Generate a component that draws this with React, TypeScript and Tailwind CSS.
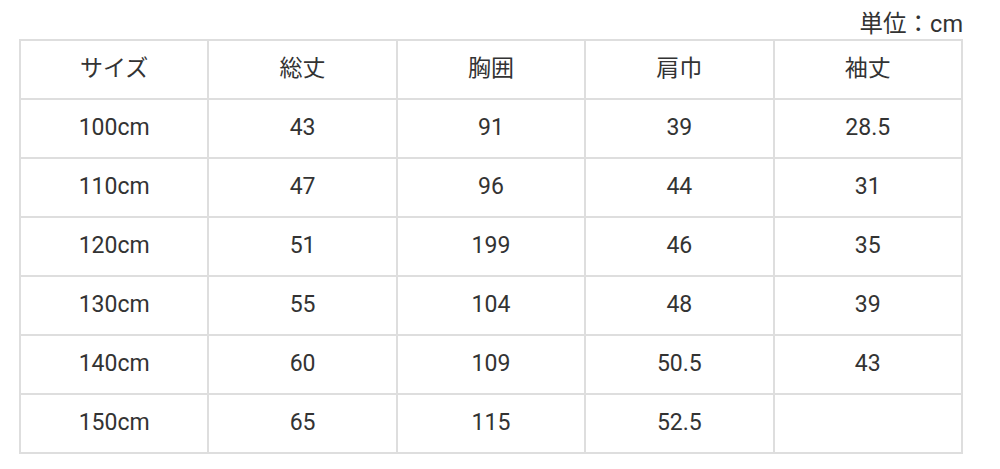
const headers = ["サイズ", "総丈", "胸囲", "肩巾", "袖丈"];

const rows = [
  ["100cm", "43", "91", "39", "28.5"],
  ["110cm", "47", "96", "44", "31"],
  ["120cm", "51", "199", "46", "35"],
  ["130cm", "55", "104", "48", "39"],
  ["140cm", "60", "109", "50.5", "43"],
  ["150cm", "65", "115", "52.5", ""],
];

export default function App() {
  return (
    <div
      className="w-[1000px] h-[469px] bg-white pl-[19px] text-[#333333]"
      style={{ fontFamily: 'Roboto, "Noto Sans CJK JP", sans-serif' }}
    >
      <div className="w-[944px]">
        <div className="flex h-[39px] items-end justify-end pb-[3px] text-[23.5px] leading-none">
          単位：cm
        </div>
        <table className="w-full table-fixed border-collapse text-[23px]">
          <thead>
            <tr className="h-[59px]">
              {headers.map((h) => (
                <th key={h} className="border-2 border-[#dedede] text-center font-normal">
                  {h}
                </th>
              ))}
            </tr>
          </thead>
          <tbody>
            {rows.map((r) => (
              <tr key={r[0]} className="h-[59px]">
                {r.map((c, i) => (
                  <td key={i} className="border-2 border-[#dedede] text-center">
                    {c}
                  </td>
                ))}
              </tr>
            ))}
          </tbody>
        </table>
      </div>
    </div>
  );
}
